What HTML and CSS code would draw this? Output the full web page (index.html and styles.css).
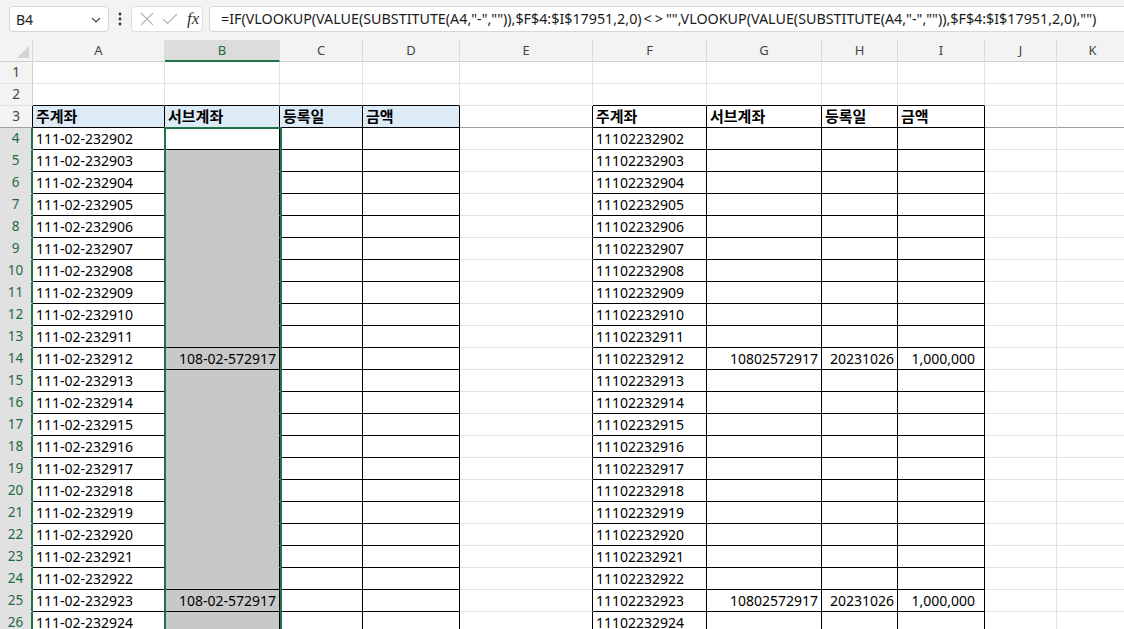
FILE: index.html
```html
<!DOCTYPE html>
<html lang="ko">
<head>
<meta charset="utf-8">
<title>Sheet</title>
<link rel="stylesheet" href="styles.css">
</head>
<body>
<div class="toolbar">
  <div class="namebox"><span>B4</span>
    <svg class="chev" width="10" height="6" viewBox="0 0 10 6"><path d="M1 1 L5 5 L9 1" fill="none" stroke="#444" stroke-width="1.2"/></svg>
  </div>
  <div class="dots"><svg width="4" height="14" viewBox="0 0 4 14"><circle cx="2" cy="2" r="1.4" fill="#333"/><circle cx="2" cy="7" r="1.4" fill="#333"/><circle cx="2" cy="12" r="1.4" fill="#333"/></svg></div>
  <div class="fxbox">
    <svg width="14" height="14" viewBox="0 0 14 14"><path d="M1 1 L13 13 M13 1 L1 13" fill="none" stroke="#b4b4b4" stroke-width="1.1"/></svg>
    <svg width="16" height="12" viewBox="0 0 16 12"><path d="M1 6 L5.5 10.5 L15 1" fill="none" stroke="#b4b4b4" stroke-width="1.1"/></svg>
    <span class="fx">fx</span>
  </div>
  <div class="formula">=IF(VLOOKUP(VALUE(SUBSTITUTE(A4,"-","")),$F$4:$I$17951,2,0)<span class="ne">&lt;&gt;</span>"",VLOOKUP(VALUE(SUBSTITUTE(A4,"-","")),$F$4:$I$17951,2,0),"")</div>
</div>

<div class="sheet">
  <div class="row colhead">
    <div class="corner"><svg width="14" height="14" viewBox="0 0 14 14"><path d="M13 1 L13 13 L1 13 Z" fill="#d4d4d4"/></svg></div>
    <div>A</div><div class="on">B</div><div>C</div><div>D</div><div>E</div><div>F</div><div>G</div><div>H</div><div>I</div><div>J</div><div>K</div>
  </div>

  <div class="row"><div class="rh">1</div><div></div><div></div><div></div><div></div><div></div><div></div><div></div><div></div><div></div><div></div><div></div></div>
  <div class="row"><div class="rh">2</div><div class="tt"></div><div class="tt"></div><div class="tt"></div><div class="tt"></div><div></div><div class="tt"></div><div class="tt"></div><div class="tt"></div><div class="tt"></div><div></div><div></div></div>
  <div class="row"><div class="rh r3">3</div><div class="t hd blue">주계좌</div><div class="t hd blue">서브계좌</div><div class="t hd blue">등록일</div><div class="t hd blue">금액</div><div class="tl fz"></div><div class="t hd">주계좌</div><div class="t hd">서브계좌</div><div class="t hd">등록일</div><div class="t hd">금액</div><div class="fz"></div><div class="fz"></div></div>

  <div class="row"><div class="rh s">4</div><div class="t">111-02-232902</div><div class="t"></div><div class="t"></div><div class="t"></div><div class="tl"></div><div class="t">11102232902</div><div class="t"></div><div class="t"></div><div class="t"></div><div></div><div></div></div>
  <div class="row"><div class="rh s">5</div><div class="t">111-02-232903</div><div class="g"></div><div class="t"></div><div class="t"></div><div class="tl"></div><div class="t">11102232903</div><div class="t"></div><div class="t"></div><div class="t"></div><div></div><div></div></div>
  <div class="row"><div class="rh s">6</div><div class="t">111-02-232904</div><div class="g"></div><div class="t"></div><div class="t"></div><div class="tl"></div><div class="t">11102232904</div><div class="t"></div><div class="t"></div><div class="t"></div><div></div><div></div></div>
  <div class="row"><div class="rh s">7</div><div class="t">111-02-232905</div><div class="g"></div><div class="t"></div><div class="t"></div><div class="tl"></div><div class="t">11102232905</div><div class="t"></div><div class="t"></div><div class="t"></div><div></div><div></div></div>
  <div class="row"><div class="rh s">8</div><div class="t">111-02-232906</div><div class="g"></div><div class="t"></div><div class="t"></div><div class="tl"></div><div class="t">11102232906</div><div class="t"></div><div class="t"></div><div class="t"></div><div></div><div></div></div>
  <div class="row"><div class="rh s">9</div><div class="t">111-02-232907</div><div class="g"></div><div class="t"></div><div class="t"></div><div class="tl"></div><div class="t">11102232907</div><div class="t"></div><div class="t"></div><div class="t"></div><div></div><div></div></div>
  <div class="row"><div class="rh s">10</div><div class="t">111-02-232908</div><div class="g"></div><div class="t"></div><div class="t"></div><div class="tl"></div><div class="t">11102232908</div><div class="t"></div><div class="t"></div><div class="t"></div><div></div><div></div></div>
  <div class="row"><div class="rh s">11</div><div class="t">111-02-232909</div><div class="g"></div><div class="t"></div><div class="t"></div><div class="tl"></div><div class="t">11102232909</div><div class="t"></div><div class="t"></div><div class="t"></div><div></div><div></div></div>
  <div class="row"><div class="rh s">12</div><div class="t">111-02-232910</div><div class="g"></div><div class="t"></div><div class="t"></div><div class="tl"></div><div class="t">11102232910</div><div class="t"></div><div class="t"></div><div class="t"></div><div></div><div></div></div>
  <div class="row"><div class="rh s">13</div><div class="t">111-02-232911</div><div class="g gb"></div><div class="t"></div><div class="t"></div><div class="tl"></div><div class="t">11102232911</div><div class="t"></div><div class="t"></div><div class="t"></div><div></div><div></div></div>
  <div class="row"><div class="rh s">14</div><div class="t">111-02-232912</div><div class="g gb rt">108-02-572917</div><div class="t"></div><div class="t"></div><div class="tl"></div><div class="t">11102232912</div><div class="t rt">10802572917</div><div class="t rt">20231026</div><div class="t rt amt">1,000,000</div><div></div><div></div></div>
  <div class="row"><div class="rh s">15</div><div class="t">111-02-232913</div><div class="g"></div><div class="t"></div><div class="t"></div><div class="tl"></div><div class="t">11102232913</div><div class="t"></div><div class="t"></div><div class="t"></div><div></div><div></div></div>
  <div class="row"><div class="rh s">16</div><div class="t">111-02-232914</div><div class="g"></div><div class="t"></div><div class="t"></div><div class="tl"></div><div class="t">11102232914</div><div class="t"></div><div class="t"></div><div class="t"></div><div></div><div></div></div>
  <div class="row"><div class="rh s">17</div><div class="t">111-02-232915</div><div class="g"></div><div class="t"></div><div class="t"></div><div class="tl"></div><div class="t">11102232915</div><div class="t"></div><div class="t"></div><div class="t"></div><div></div><div></div></div>
  <div class="row"><div class="rh s">18</div><div class="t">111-02-232916</div><div class="g"></div><div class="t"></div><div class="t"></div><div class="tl"></div><div class="t">11102232916</div><div class="t"></div><div class="t"></div><div class="t"></div><div></div><div></div></div>
  <div class="row"><div class="rh s">19</div><div class="t">111-02-232917</div><div class="g"></div><div class="t"></div><div class="t"></div><div class="tl"></div><div class="t">11102232917</div><div class="t"></div><div class="t"></div><div class="t"></div><div></div><div></div></div>
  <div class="row"><div class="rh s">20</div><div class="t">111-02-232918</div><div class="g"></div><div class="t"></div><div class="t"></div><div class="tl"></div><div class="t">11102232918</div><div class="t"></div><div class="t"></div><div class="t"></div><div></div><div></div></div>
  <div class="row"><div class="rh s">21</div><div class="t">111-02-232919</div><div class="g"></div><div class="t"></div><div class="t"></div><div class="tl"></div><div class="t">11102232919</div><div class="t"></div><div class="t"></div><div class="t"></div><div></div><div></div></div>
  <div class="row"><div class="rh s">22</div><div class="t">111-02-232920</div><div class="g"></div><div class="t"></div><div class="t"></div><div class="tl"></div><div class="t">11102232920</div><div class="t"></div><div class="t"></div><div class="t"></div><div></div><div></div></div>
  <div class="row"><div class="rh s">23</div><div class="t">111-02-232921</div><div class="g"></div><div class="t"></div><div class="t"></div><div class="tl"></div><div class="t">11102232921</div><div class="t"></div><div class="t"></div><div class="t"></div><div></div><div></div></div>
  <div class="row"><div class="rh s">24</div><div class="t">111-02-232922</div><div class="g gb"></div><div class="t"></div><div class="t"></div><div class="tl"></div><div class="t">11102232922</div><div class="t"></div><div class="t"></div><div class="t"></div><div></div><div></div></div>
  <div class="row"><div class="rh s">25</div><div class="t">111-02-232923</div><div class="g gb rt">108-02-572917</div><div class="t"></div><div class="t"></div><div class="tl"></div><div class="t">11102232923</div><div class="t rt">10802572917</div><div class="t rt">20231026</div><div class="t rt amt">1,000,000</div><div></div><div></div></div>
  <div class="row"><div class="rh s">26</div><div class="t">111-02-232924</div><div class="g"></div><div class="t"></div><div class="t"></div><div class="tl"></div><div class="t">11102232924</div><div class="t"></div><div class="t"></div><div class="t"></div><div></div><div></div></div>

  <div class="selbox"></div>
</div>
</body>
</html>
```

FILE: styles.css
```css
* { box-sizing: border-box; }
html, body { margin: 0; height: 100%; overflow: hidden; background: #fff; }
body { font-family: "Noto Sans", "Noto Sans CJK KR", sans-serif; color: #000; }

.toolbar {
  height: 40px;
  background: #f3f3f3;
  display: flex;
  align-items: flex-start;
  padding-top: 6px;
}
.namebox {
  margin-left: 9px;
  width: 100px;
  height: 26px;
  background: #fff;
  border: 1px solid #d6d6d6;
  border-radius: 4px;
  display: flex;
  align-items: center;
  justify-content: space-between;
  padding: 0 7px 0 6px;
  font-size: 14px;
  color: #222;
}
.chev { margin-top: 2px; }
.dots {
  width: 22px;
  height: 26px;
  display: flex;
  align-items: center;
  justify-content: center;
}
.fxbox {
  width: 72px;
  height: 26px;
  background: #fff;
  border: 1px solid #dedede;
  border-radius: 4px;
  display: flex;
  align-items: center;
  gap: 8px;
  padding-left: 8px;
}
.fx {
  font-family: "Liberation Serif", serif;
  font-style: italic;
  font-size: 17px;
  color: #333;
  margin-left: 1px;
}
.formula {
  flex: 1;
  margin-left: 6px;
  margin-right: -12px;
  height: 26px;
  background: #fff;
  border: 1px solid #d6d6d6;
  border-radius: 4px;
  padding-left: 11px;
  font-size: 14.3px;
  line-height: 24px;
  white-space: nowrap;
  overflow: hidden;
  color: #1a1a1a;
}
.formula .ne { letter-spacing: 3px; padding-left: 2px; }

.sheet { position: relative; }
.row {
  display: grid;
  grid-template-columns: 33px 132px 115px 83px 97px 133px 114px 115px 76px 87px 72px 72px;
  height: 22px;
}
.row > div {
  border-right: 1px solid #e1e1e1;
  border-bottom: 1px solid #e1e1e1;
  font-size: 14px;
  line-height: 21px;
  padding: 0 3px;
  white-space: nowrap;
  overflow: hidden;
}

.colhead > div {
  background: #f3f3f3;
  border-right-color: #dadada;
  border-bottom-color: #d0d0d0;
  text-align: center;
  font-size: 13px;
  color: #444;
}
.colhead > div.on {
  background: #dcdcdc;
  color: #1e6b41;
  border-bottom: 2px solid #217346;
}
.colhead > .corner {
  display: flex;
  align-items: flex-end;
  justify-content: flex-end;
  padding: 0 2px 2px 0;
}

.row > .rh {
  background: #f3f3f3;
  text-align: center;
  font-size: 13.5px;
  color: #444;
  border-right-color: #d0d0d0;
  border-bottom-color: #e1e1e1;
  padding: 0;
}
.row > .rh.r3 { border-right-color: #000; border-bottom-color: #a0a0a0; }
.row > .rh.s {
  background: #e1e1e1;
  color: #1e6b41;
  border-right: 2px solid #217346;
}

.row > .t { border-right-color: #000; border-bottom-color: #000; }
.row > .tl { border-right-color: #000; }
.row > .tt { border-bottom-color: #000; }
.row > .fz { border-bottom-color: #a0a0a0; }
.row > .hd { font-weight: 700; font-size: 15px; padding-left: 3px; }
.row > .blue { background: #ddebf7; }

.row > .g {
  background: #c8c8c8;
  border-right-color: #000;
  border-bottom-color: #c8c8c8;
}
.row > .g.gb { border-bottom-color: #000; }
.row > .rt { text-align: right; }
.row > .amt { padding-right: 9px; }

.selbox {
  position: absolute;
  left: 164px;
  top: 87px;
  width: 118px;
  height: 520px;
  border: 2px solid #217346;
  border-bottom: none;
  pointer-events: none;
}
```
